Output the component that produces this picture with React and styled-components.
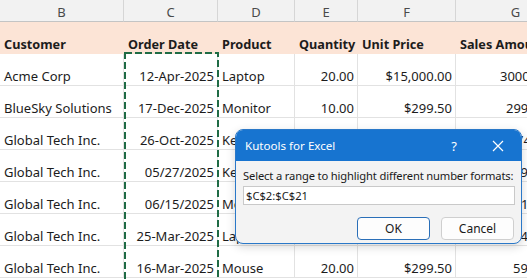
import React from "react";
import styled, { createGlobalStyle } from "styled-components";

const Global = createGlobalStyle`
  html, body { margin: 0; padding: 0; background: #ffffff; }
  body { width: 527px; height: 279px; overflow: hidden; font-family: "Noto Sans", "Open Sans", sans-serif; }
`;

const Sheet = styled.div`
  position: relative;
  width: 527px;
  height: 279px;
  overflow: hidden;
`;

const Grid = styled.div`
  display: grid;
  grid-template-columns: 124px 94px 77px 63px 98px 120px;
  grid-auto-rows: 32px;
  grid-template-rows: 22px 32px;
`;

const ColHead = styled.div`
  background: #f2f2f2;
  border-right: 1px solid #d6d6d6;
  border-bottom: 1px solid #c4c4c4;
  color: #4a4a4a;
  font-size: 13px;
  display: flex;
  align-items: center;
  justify-content: center;
  padding-top: 2px;
  box-sizing: border-box;
`;

const Cell = styled.div`
  box-sizing: border-box;
  border-right: 1px solid ${(p) => (p.$head ? "transparent" : "#e2e2e2")};
  border-bottom: 1px solid ${(p) => (p.$head ? "transparent" : "#e2e2e2")};
  background: ${(p) => (p.$head ? "#fce4d6" : "#ffffff")};
  font-weight: ${(p) => (p.$head ? 700 : 400)};
  color: #1c1c1c;
  font-size: ${(p) => (p.$head ? "12.7px" : "13px")};
  display: flex;
  align-items: flex-end;
  justify-content: ${(p) => (p.$right ? "flex-end" : "flex-start")};
  padding: 0 3px 0 4px;
  white-space: nowrap;
  overflow: visible;
  line-height: 18px;
`;

const Ants = styled.svg`
  position: absolute;
  left: 124px;
  top: 52px;
  width: 95px;
  height: 240px;
  pointer-events: none;
`;

const Dialog = styled.div`
  position: absolute;
  left: 235px;
  top: 129px;
  width: 287px;
  height: 115px;
  box-sizing: border-box;
  border: 1px solid #2a78c8;
  border-radius: 8px;
  background: #f3f3f3;
  box-shadow: 0 3px 10px rgba(0, 0, 0, 0.16);
  overflow: hidden;
  display: flex;
  flex-direction: column;
  font-family: "Noto Sans", "Open Sans", sans-serif;
`;

const TitleBar = styled.div`
  height: 31px;
  flex: none;
  background: #1774d0;
  color: #ffffff;
  display: flex;
  align-items: center;
  padding: 0 0 0 9px;
  font-size: 11.6px;
`;

const Title = styled.div`
  flex: 1;
`;

const TitleBtn = styled.div`
  width: ${(p) => p.$w}px;
  display: flex;
  align-items: center;
  justify-content: center;
  font-size: 13px;
  color: #ffffff;
`;

const Body = styled.div`
  padding: 7px 6px 0 7px;
  display: flex;
  flex-direction: column;
`;

const Label = styled.div`
  font-size: 11.2px;
  letter-spacing: -0.15px;
  color: #1a1a1a;
  line-height: 16px;
  white-space: nowrap;
`;

const Input = styled.div`
  margin-top: 2px;
  height: 19px;
  box-sizing: border-box;
  border: 1px solid #c9c9c9;
  background: #ffffff;
  font-size: 11.2px;
  color: #1a1a1a;
  display: flex;
  align-items: center;
  padding-left: 2px;
`;

const Buttons = styled.div`
  display: flex;
  justify-content: flex-end;
  gap: 11px;
  margin-top: 12px;
  padding-right: 1px;
`;

const Button = styled.div`
  width: 73px;
  height: 23px;
  box-sizing: border-box;
  border-radius: 4px;
  border: 1px solid ${(p) => (p.$primary ? "#2a6fb8" : "#cfcfcf")};
  background: #fdfdfd;
  font-size: 12px;
  color: #1a1a1a;
  display: flex;
  align-items: center;
  justify-content: center;
`;

const cols = ["B", "C", "D", "E", "F", "G"];
const heads = ["Customer", "Order Date", "Product", "Quantity", "Unit Price", "Sales Amount"];
const rows = [
  ["Acme Corp", "12-Apr-2025", "Laptop", "20.00", "$15,000.00", "300000.00"],
  ["BlueSky Solutions", "17-Dec-2025", "Monitor", "10.00", "$299.50", "2995.00"],
  ["Global Tech Inc.", "26-Oct-2025", "Keyboard", "15.00", "$49.99", "749.85"],
  ["Global Tech Inc.", "05/27/2025", "Keyboard", "12.00", "$49.99", "599.88"],
  ["Global Tech Inc.", "06/15/2025", "Monitor", "5.00", "$299.50", "1497.50"],
  ["Global Tech Inc.", "25-Mar-2025", "Laptop", "2.00", "$1,200.00", "2400.00"],
  ["Global Tech Inc.", "16-Mar-2025", "Mouse", "20.00", "$299.50", "5990.00"],
];
const gPad = [44, 50, 60, 57, 65, 57, 57];
const rightCols = [false, true, false, true, true, false];

export default function App() {
  return (
    <Sheet>
      <Global />
      <Grid>
        {cols.map((c) => (
          <ColHead key={c}>{c}</ColHead>
        ))}
        {heads.map((h) => (
          <Cell key={h} $head>
            {h}
          </Cell>
        ))}
        {rows.map((r, ri) =>
          r.map((v, ci) => (
            <Cell
              key={ri + "-" + ci}
              $right={rightCols[ci]}
              style={ci === 5 ? { paddingLeft: gPad[ri] } : undefined}
            >
              {v}
            </Cell>
          ))
        )}
      </Grid>
      <Ants viewBox="0 0 95 240">
        <rect x="1" y="1" width="93" height="260" fill="none" stroke="#1f6b45" strokeWidth="2" strokeDasharray="7 3" />
      </Ants>
      <Dialog>
        <TitleBar>
          <Title>Kutools for Excel</Title>
          <TitleBtn $w={42}>?</TitleBtn>
          <TitleBtn $w={46}>
            <svg width="12" height="12" viewBox="0 0 12 12">
              <path d="M1 1 L11 11 M11 1 L1 11" stroke="#fff" strokeWidth="1.2" fill="none" />
            </svg>
          </TitleBtn>
        </TitleBar>
        <Body>
          <Label>Select a range to highlight different number formats:</Label>
          <Input>$C$2:$C$21</Input>
          <Buttons>
            <Button $primary>OK</Button>
            <Button>Cancel</Button>
          </Buttons>
        </Body>
      </Dialog>
    </Sheet>
  );
}
